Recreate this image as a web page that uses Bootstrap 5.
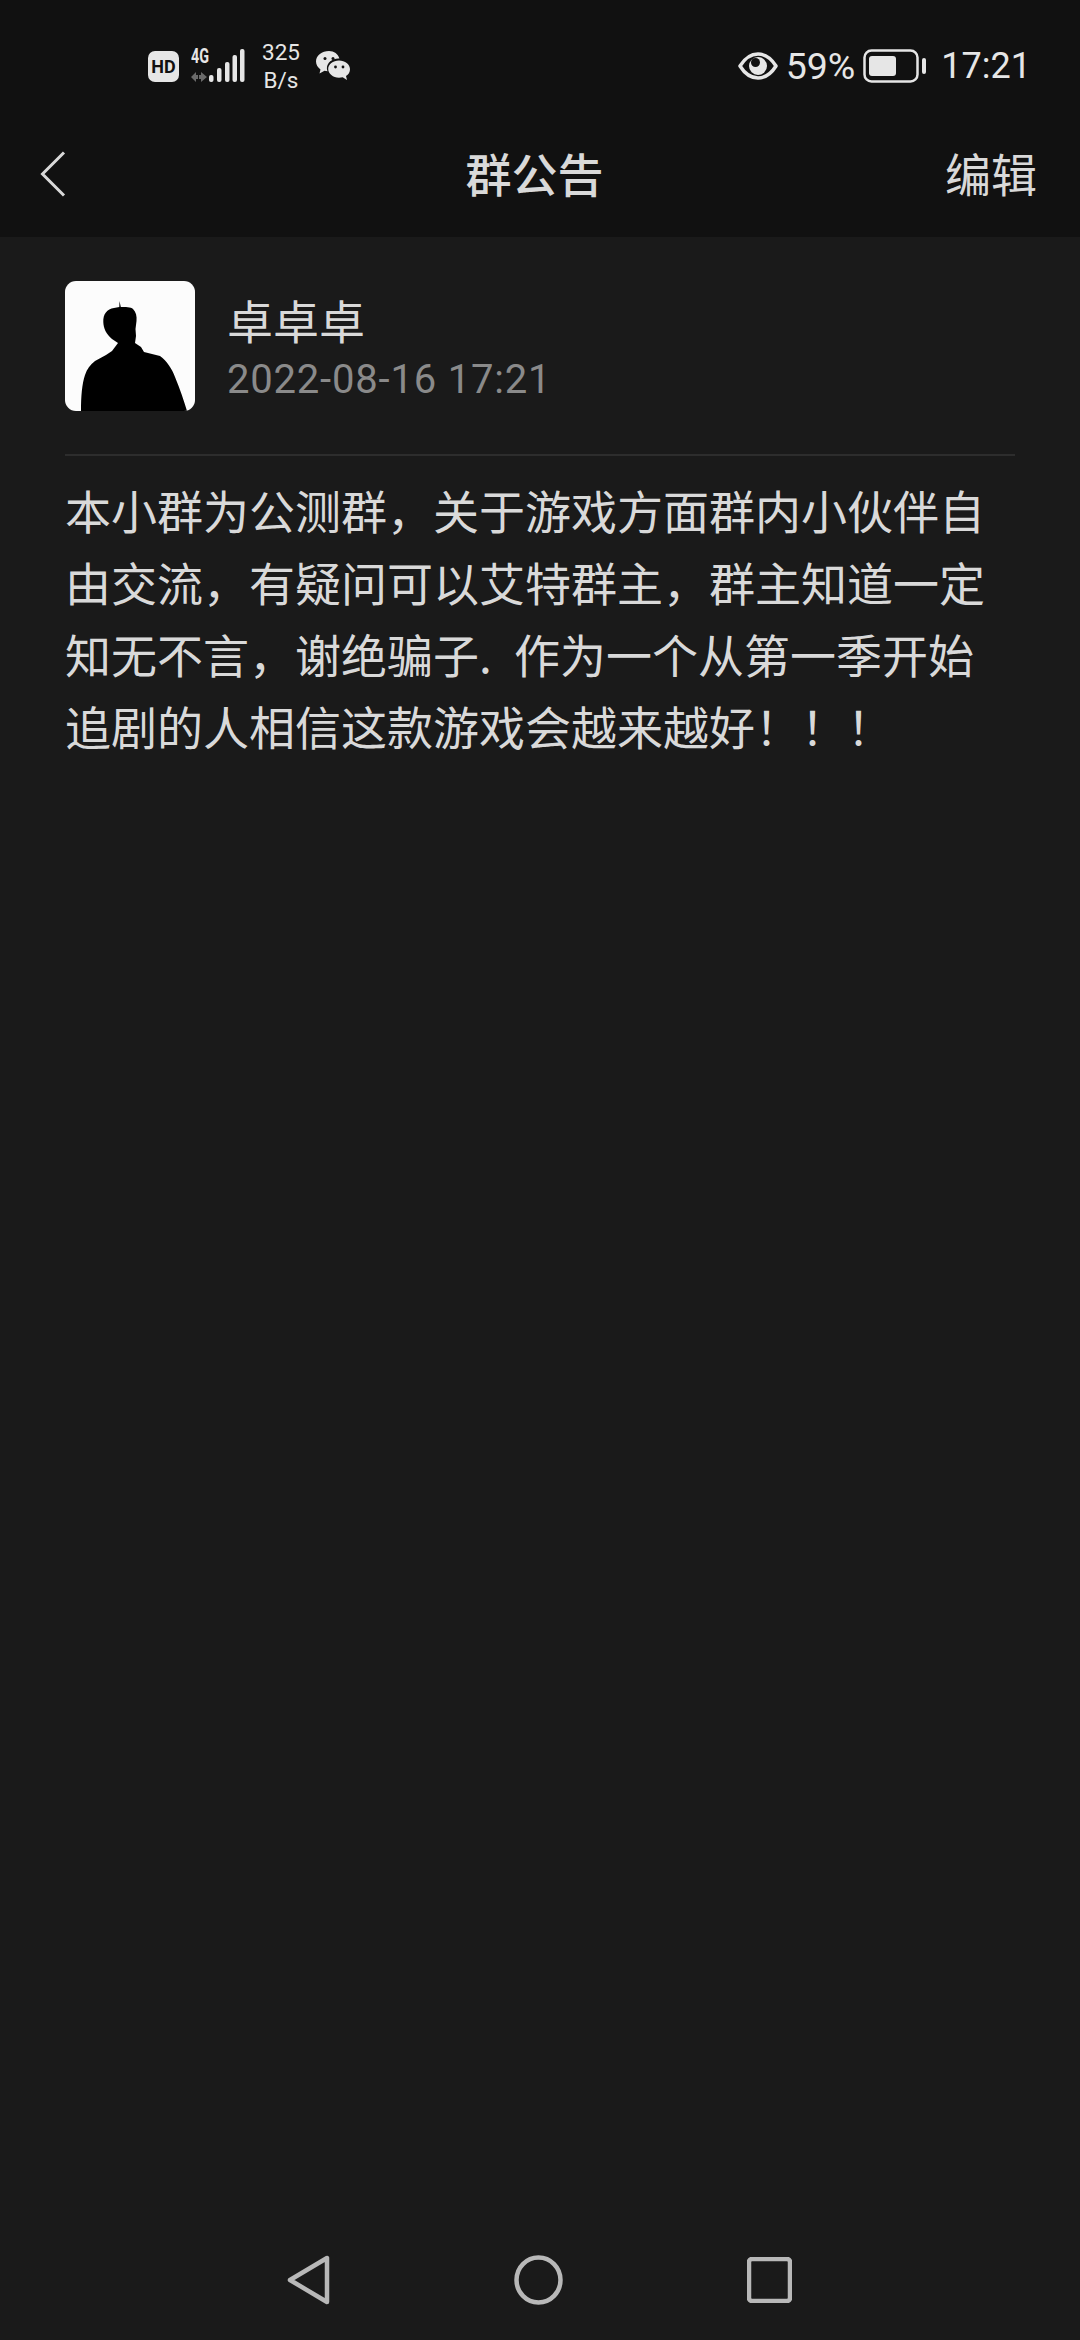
<!DOCTYPE html>
<html lang="zh-CN">
<head>
  <meta charset="UTF-8">
  <title>群公告</title>
  <link href="https://cdn.jsdelivr.net/npm/bootstrap@5.3.0/dist/css/bootstrap.min.css" rel="stylesheet">
  <style>
    body { background: #1a1a1a; font-family: "Roboto", "Noto Sans CJK SC", sans-serif; color: #d9d9d9; }
    .page-wrap { height: 2340px; width: 1080px; }
    .top-zone { background: #111; height: 237px; }
    .status-row { height: 132px; padding: 0 49px 0 148px; color: #e6e6e6; font-size: 36px; }
    .hd-tag { width: 31px; height: 31px; background: #e6e6e6; color: #111; border-radius: 7px; font: 700 18px/31px "Roboto", sans-serif; text-align: center; }
    .signal-wrap { margin-left: 12px; }
    .speed-box { width: 38px; margin-left: 17px; font-size: 22.500px; line-height: 28px; text-align: center; }
    .wechat-ico { margin-left: 16px; }
    .pct-txt { margin-left: 8px; font-size: 37.500px; }
    .batt-ico { margin-left: 8px; }
    .time-txt { margin-left: 14px; }
    .title-row { height: 86px; padding: 0 43px 0 32px; }
    .back-btn { margin: -3px 0 0 8px; }
    .title-txt { font: 500 46px/1 "Noto Sans CJK SC", sans-serif; color: #d9d9d9; margin-top: -6px; }
    .edit-txt { font: 400 46px/1 "Noto Sans CJK SC", sans-serif; color: #d9d9d9; margin-top: -6px; }
    .side-cell { flex: 1 1 0; }
    .notice-body { padding: 44px 65px 0; }
    .author-row { padding-bottom: 43px; border-bottom: 2px solid #2d2d2d; }
    .avatar-pic { width: 130px; height: 130px; border-radius: 11px; background: #fcfcfc; overflow: hidden; }
    .author-info { margin-left: 33px; padding-top: 10px; }
    .author-name { font: 400 46px/56px "Noto Sans CJK SC", sans-serif; color: #d9d9d9; margin-left: -1px; }
    .author-date { font: 400 40px/56px "Roboto", sans-serif; letter-spacing: .8px; color: #8a8a8a; margin: 5px 0 0 -1px; }
    .notice-text { margin: 17px 0 0; font: 400 46px/72px "Noto Sans CJK SC", sans-serif; word-spacing: 12px; color: #d9d9d9; }
    .nav-row { padding: 0 0 35px 287px; gap: 184px; }
  </style>
</head>
<body>
  <div class="page-wrap d-flex flex-column">
    <div class="top-zone">
      <div class="status-row d-flex align-items-center">
        <div class="hd-tag">HD</div>
        <svg class="signal-wrap" width="54" height="48" viewBox="0 -6 54 48">
          <text x="0" y="15" font-family="Roboto" font-weight="700" font-size="20" fill="#e6e6e6" textLength="18" lengthAdjust="spacingAndGlyphs">4G</text>
          <path d="M0 29 5 24v3h2v4H5v3zM10 27V24l6 5-6 5v-3H8v-4z" fill="#6a6a6a"/>
          <g fill="#e6e6e6">
            <rect x="18" y="27" width="4.500" height="7" rx="2"/>
            <rect x="26" y="20" width="4.500" height="14" rx="2"/>
            <rect x="34" y="14" width="4.500" height="20" rx="2"/>
            <rect x="41.500" y="7" width="4.500" height="27" rx="2"/>
            <rect x="49" y="1" width="4.500" height="33" rx="2"/>
          </g>
        </svg>
        <div class="speed-box">325<br>B/s</div>
        <svg class="wechat-ico" width="34" height="30" viewBox="0 0 34 30">
          <path d="M13 0C6 0 0 4.500 0 10.500c0 3.300 1.800 6 4.500 8L3.500 22.500l5-2.700c1 .3 2 .4 3 .5-.4-1-.6-2-.6-3 0-5.500 5.200-9.800 11.500-9.800h1C22.300 3 18 0 13 0z" fill="#e6e6e6"/>
          <path d="M23 9.500c-6 0-10.800 3.800-10.800 8.600S17 26.700 23 26.700c1.300 0 2.500-.2 3.700-.5l4.300 2.800-1-3.900c2.500-1.600 4-4 4-6.900 0-4.800-5-8.700-11-8.700z" fill="#e6e6e6"/>
          <g fill="#111"><circle cx="9" cy="7.500" r="1.500"/><circle cx="17" cy="7.500" r="1.500"/><circle cx="19.500" cy="16" r="1.400"/><circle cx="27" cy="16" r="1.400"/></g>
        </svg>
        <svg class="ms-auto" width="40" height="28" viewBox="0 0 40 28">
          <path d="M2 14C7 6 13 2 20 2s13 4 18 12c-5 8-11 12-18 12S7 22 2 14z" fill="none" stroke="#e6e6e6" stroke-width="3.500" stroke-linejoin="round"/>
          <circle cx="20" cy="14" r="9" fill="#e6e6e6"/>
          <circle cx="17.500" cy="10.500" r="4.500" fill="#111"/>
        </svg>
        <span class="pct-txt">59%</span>
        <svg class="batt-ico" width="64" height="34" viewBox="0 0 64 34">
          <rect x="1.500" y="1.500" width="53" height="31" rx="7" fill="none" stroke="#e6e6e6" stroke-width="2.500"/>
          <rect x="6" y="7" width="27" height="20" rx="3" fill="#e6e6e6"/>
          <rect x="59" y="9" width="4" height="16" rx="2" fill="#e6e6e6"/>
        </svg>
        <span class="time-txt">17:21</span>
      </div>
      <div class="title-row d-flex align-items-center">
        <div class="side-cell">
          <svg class="back-btn d-block" width="26" height="46" viewBox="0 0 26 46">
            <path d="M24 1.500 2.500 23 24 44.500" fill="none" stroke="#d9d9d9" stroke-width="3"/>
          </svg>
        </div>
        <div class="title-txt">群公告</div>
        <div class="side-cell text-end edit-txt">编辑</div>
      </div>
    </div>

    <div class="notice-body flex-grow-1">
      <div class="author-row d-flex">
        <div class="avatar-pic flex-shrink-0">
          <svg class="d-block" width="130" height="130" viewBox="0 0 130 130">
            <path d="M38.300 41C38 33 42 28 49 27L54.300 26 54.500 20 55.800 26C60 26 66 26 68 28 71 31 72 35 71.500 40L70.500 48 71 55 70 62 76 66 79 71 95 75C102 80 107 88 110 96 115 108 119 120 122 130H16C16 115 17 103 20 94 22 88 25 84 30 80L41 74 47 70 53 62 47 58C41 53 38.500 47 38.300 41z" fill="#000"/>
          </svg>
        </div>
        <div class="author-info">
          <div class="author-name">卓卓卓</div>
          <div class="author-date">2022-08-16 17:21</div>
        </div>
      </div>
      <p class="notice-text">本小群为公测群，关于游戏方面群内小伙伴自由交流，有疑问可以艾特群主，群主知道一定知无不言，谢绝骗子. 作为一个从第一季开始追剧的人相信这款游戏会越来越好！！！</p>
    </div>

    <div class="nav-row d-flex align-items-center">
      <svg width="43" height="50" viewBox="0 0 43 50">
        <path d="M3 25 40 3V47z" fill="none" stroke="#b8b8b8" stroke-width="4.500" stroke-linejoin="round"/>
      </svg>
      <svg width="49" height="50" viewBox="0 0 49 50">
        <ellipse cx="24.500" cy="25" rx="22" ry="22.500" fill="none" stroke="#b8b8b8" stroke-width="4.500"/>
      </svg>
      <svg width="45" height="46" viewBox="0 0 45 46">
        <rect x="2" y="2" width="41" height="42" rx="3" fill="none" stroke="#b8b8b8" stroke-width="4.500"/>
      </svg>
    </div>
  </div>

  <script src="https://cdn.jsdelivr.net/npm/bootstrap@5.3.0/dist/js/bootstrap.bundle.min.js"></script>
</body>
</html>
